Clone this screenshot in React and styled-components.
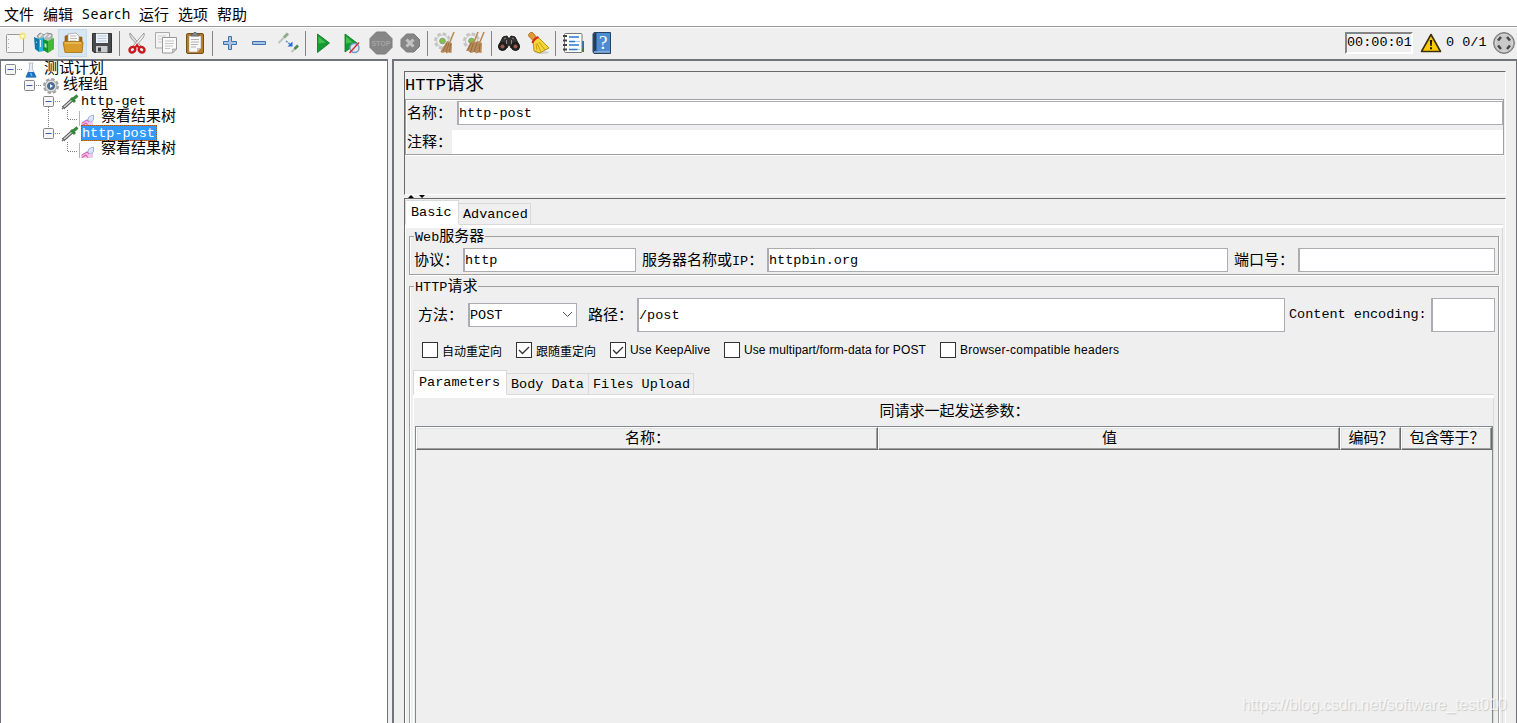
import React from "react";
import styled, { createGlobalStyle } from "styled-components";

const GlobalStyle = createGlobalStyle`
  * { box-sizing: border-box; }
  body {
    margin: 0;
    overflow: hidden;
    background: #fff;
    color: #000;
    font-family: "Liberation Mono", "Noto Sans CJK SC", monospace;
  }
  svg { display: block; flex: none; }
`;

/* ---------- text ---------- */

// CJK glyphs are drawn a little larger than the monospaced latin ones
const Text = ({ children, size = 15 }) =>
  children.split(/([\u2e80-\uffff]+)/).filter(Boolean).map((part, i) =>
    /[\u2e80-\uffff]/.test(part) ? (
      <Han key={i} $size={size}>{part}</Han>
    ) : (
      <Latin key={i} $size={size}>{part}</Latin>
    )
  );

const Han = styled.span`
  font-family: "Noto Sans CJK SC", sans-serif;
  font-size: ${props => props.$size}px;
  font-weight: 400;
`;

const Latin = styled.span`
  font-family: "Liberation Mono", monospace;
  font-size: ${props => props.$size * 0.9}px;
`;

/* ---------- toolbar icons ---------- */

const Svg = ({ children, size = 24 }) => (
  <svg width={size} height={size} viewBox="0 0 24 24" fill="none">{children}</svg>
);

const NewIcon = () => (
  <Svg>
    <rect x="3.5" y="3.5" width="17" height="18" rx="1" fill="#f6f6f6" stroke="#999" />
    <path d="M5.5 8v1M5.5 12v1M5.5 16v1" stroke="#aaa" />
    <circle cx="19.5" cy="5" r="3.4" fill="#f5e56b" opacity=".8" />
    <circle cx="19.5" cy="5" r="1.6" fill="#fffce0" />
  </Svg>
);

const TemplatesIcon = () => (
  <Svg>
    <path d="M5 5l3-3 4 2 3-2 5 1v9l-9 2z" fill="#b5bcbc" stroke="#778080" strokeWidth=".8" />
    <path d="M7 6l3-3M12 6l3-3M16 6l3-2" stroke="#eee" strokeWidth="1.3" />
    <path d="M2 6l5 2v13l-4-3z" fill="#087daa" />
    <path d="M7 8l5-2v14l-5 1z" fill="#2cb4e5" />
    <path d="M8.5 9v7M4 11l1 .5" stroke="#d9f5ff" />
    <path d="M11 8l5 2v12l-5-3z" fill="#159132" />
    <path d="M16 10l6-3v11l-6 4z" fill="#43ba37" />
    <path d="M12.5 12l2 1v4l-2-1z" fill="#b8edba" />
  </Svg>
);

const OpenIcon = () => (
  <Svg>
    <path d="M4 11V5l4-1 2 2h11v13H4z" fill="#9d6710" stroke="#865814" strokeWidth=".6" />
    <path d="M7 12V3l8-1 3 3v8z" fill="#fafafa" stroke="#999" strokeWidth=".7" />
    <path d="M9 5h6M9 7.5h7M9 10h6" stroke="#aaa" strokeWidth=".8" />
    <path d="M2.2 12q0-1.5 1.5-1.5h17q1.5 0 1.3 1.5l-1 9.500H4z" fill="#d99d2b" stroke="#a5700e" strokeWidth=".8" />
    <path d="M4 12h16" stroke="#f5cf75" />
  </Svg>
);

const SaveIcon = () => (
  <Svg>
    <path d="M2.5 2.5h19v19H4l-1.5-1.5z" fill="#48494c" stroke="#303134" />
    <path d="M6 2.5h12v9.5H6z" fill="#eef3f9" />
    <path d="M7.5 5h9M7.5 7.5h9M7.5 10h9" stroke="#a6bcd3" strokeWidth=".8" />
    <path d="M6 15h11.5v6.5H6z" fill="#c9cbcd" />
    <path d="M8 16.5h3v4H8z" fill="#3a3b3e" />
  </Svg>
);

const CutIcon = () => (
  <Svg>
    <path d="M5 2q-1 2 1 5l8 9 2-1z" fill="#ddd" stroke="#888" strokeWidth=".8" />
    <path d="M19 2q1 2-1 5l-8 9-2-1z" fill="#f2f2f2" stroke="#888" strokeWidth=".8" />
    <ellipse cx="7.4" cy="18.7" rx="3" ry="2.6" stroke="#cb1a1e" strokeWidth="2.5" transform="rotate(-35 7.4 18.7)" />
    <ellipse cx="16.6" cy="18.7" rx="3" ry="2.6" stroke="#cb1a1e" strokeWidth="2.5" transform="rotate(35 16.6 18.7)" />
    <path d="M10 17l2-3 2 3" stroke="#cb1a1e" strokeWidth="2" />
  </Svg>
);

const CopyIcon = () => (
  <Svg>
    <path d="M1.5 1.5h14v15.5h-14z" fill="#f4f4f4" stroke="#aaa" />
    <path d="M4 5h8M4 8h8M4 11h4" stroke="#ccc" />
    <path d="M8.5 6.5h14V18l-4 4H8.5z" fill="#fafafa" stroke="#999" />
    <path d="M11 10h9M11 12.5h9M11 15h8M11 17.5h5" stroke="#c4c4c4" />
    <path d="M22.5 18h-4v4z" fill="#ccc" stroke="#999" strokeWidth=".7" />
  </Svg>
);

const PasteIcon = () => (
  <Svg>
    <rect x="3.5" y="2.5" width="17" height="20" rx="1.5" fill="#b87b25" stroke="#75501c" />
    <path d="M6 5h12v12l-4 4H6z" fill="#f8f8f8" stroke="#999" strokeWidth=".5" />
    <path d="M8 8.5h8M8 11h8M8 13.5h7M8 16h5" stroke="#aaa" strokeWidth=".9" />
    <path d="M18 17h-4v4z" fill="#c3c5c3" />
    <path d="M8 5V3h2l1-1.5h2L14 3h2v2z" fill="#888" stroke="#555" strokeWidth=".7" />
  </Svg>
);

const PlusIcon = () => (
  <Svg>
    <path d="M10.5 5.5h3v5h5v3h-5v5h-3v-5h-5v-3h5z" fill="#a7c5e6" stroke="#3d72ae" />
  </Svg>
);

const MinusIcon = () => (
  <Svg>
    <path d="M5.5 10.5h13v3h-13z" fill="#a7c5e6" stroke="#3d72ae" />
  </Svg>
);

const ToggleIcon = () => (
  <Svg>
    <path d="M2.5 12l7-7" stroke="#bbc5b8" strokeWidth="2" />
    <path d="M8 6.5l4-4" stroke="#8cad88" strokeWidth="3" />
    <path d="M15.5 21l4-4" stroke="#bcc5bc" strokeWidth="2" />
    <path d="M18.5 18l3.5-3.5" stroke="#4a8c4e" strokeWidth="2.6" />
    <path d="M10 10l5 4" stroke="#4d83db" strokeWidth="1.4" strokeDasharray="2 1" />
    <path d="M16.5 10.5v5h-5z" fill="#2468db" />
  </Svg>
);

const PlayIcon = () => (
  <Svg>
    <path d="M6.5 3L18.5 12 6.5 21.5z" fill="#149b31" stroke="#087322" strokeWidth=".8" />
    <path d="M7.5 5.5l7 6-7 1z" fill="#45bd4f" />
  </Svg>
);

const PlayNoTimerIcon = () => (
  <Svg>
    <path d="M5 3l12 9L5 21z" fill="#149b31" stroke="#087322" strokeWidth=".8" />
    <path d="M6 5.5l7 6-7 1z" fill="#45bd4f" />
    <circle cx="14.5" cy="17" r="4.5" fill="#dceaf6" stroke="#709cc6" strokeWidth="1.4" />
    <path d="M9.5 22L19 11.5" stroke="#d42a30" strokeWidth="1.4" />
  </Svg>
);

const StopText = styled.text`
  font: bold 8px "Liberation Sans", sans-serif;
  fill: #a4a4a4;
`;

const StopIcon = () => (
  <Svg>
    <path d="M7.5 1h9L23 7.5v9L16.5 23h-9L1 16.5v-9z" fill="#868686" stroke="#7d7d7d" />
    <StopText x="2.4" y="15" textLength="19" lengthAdjust="spacingAndGlyphs">STOP</StopText>
  </Svg>
);

const ShutdownIcon = () => (
  <Svg>
    <path d="M8.5 3H16l5.5 5.5v7L16 21H8.5L3 15.5v-7z" fill="#868686" stroke="#7a7a7a" />
    <path d="M8.5 8.5l7 7M15.5 8.5l-7 7" stroke="#c4c4c4" strokeWidth="3" />
  </Svg>
);

const Gear = () => (
  <>
    <circle cx="9.5" cy="10" r="7" stroke="#c4c4c4" strokeWidth="3" strokeDasharray="3.500 2" />
    <circle cx="9.5" cy="10" r="6" fill="#eee" stroke="#c5c5c5" />
    <circle cx="9.5" cy="10" r="2.8" fill="#7fc540" stroke="#8b9b83" />
  </>
);

const ClearIcon = () => (
  <Svg>
    <Gear />
    <path d="M21 1l-4 10" stroke="#b98d5b" strokeWidth="1.6" />
    <path d="M14 10l5 2-.5 10-3-.5-2 1-1-1.5-3.500 1-1.500-1.500z" fill="#b98b5c" />
    <path d="M14 12l-4 8M16 12l-3 9M17.5 13l-1 8" stroke="#8c6238" strokeWidth=".7" />
  </Svg>
);

const ClearAllIcon = () => (
  <Svg>
    <Gear />
    <path d="M16 1l-4 10M22 1l-4 10" stroke="#b98d5b" strokeWidth="1.6" />
    <path d="M9 10l4 1 3-1 4 2-.5 10-3-.5-2 1-2-1.500-4 1-2-2H4z" fill="#b98b5c" />
    <path d="M9.5 12l-4 7M11.5 12l-3 9M15 12l-3 9M18 13l-1 8" stroke="#8c6238" strokeWidth=".8" />
  </Svg>
);

const SearchIcon = () => (
  <Svg>
    <path d="M6 6l4-1 2 3 2-3 4 1 4 8v3h-8l-2-4-2 4H2v-3z" fill="#34302f" stroke="#1c1a19" />
    <circle cx="5.5" cy="15.5" r="4" fill="#242120" stroke="#171717" />
    <circle cx="18.5" cy="15.5" r="4" fill="#242120" stroke="#171717" />
    <circle cx="5.5" cy="15.5" r="2" fill="#9a5842" />
    <circle cx="18.5" cy="15.5" r="2" fill="#9a5842" />
    <path d="M7 8l2-1M15 7l2 1M9.5 9v4M14.5 9v4" stroke="#8b8783" />
  </Svg>
);

const ResetSearchIcon = () => (
  <Svg>
    <ellipse cx="16" cy="21.5" rx="7" ry="1.5" fill="#ccc" />
    <path d="M2.5 3.5l2-2h2l5 6L8 10.500l-5-5z" fill="#e39a31" stroke="#a15d16" strokeWidth=".8" />
    <path d="M7 10l4-4 3 2 9 9-5 2.500-4 2.500-6-2z" fill="#f5d637" stroke="#b79217" />
    <path d="M11 12l4 9M13 11l6 8M10 13l1 6" stroke="#b79218" strokeWidth=".8" />
    <path d="M6.5 12q1-4 6-6" stroke="#d72824" strokeWidth="2.2" />
  </Svg>
);

const FunctionIcon = () => (
  <Svg>
    <path d="M19 10h4v7h-4z" fill="#1b6ce3" />
    <path d="M19 17h4v4h-4z" fill="#27871b" />
    <rect x="3.5" y="2.5" width="17.5" height="19" rx="1" fill="#fff" stroke="#777" />
    <path d="M2 5h4M2 9.5h4M2 14h4M2 18.5h4" stroke="#444" strokeWidth="1.8" />
    <path d="M8 6h10M8 10.5h6M8 14h10M8 18.5h9" stroke="#2978cf" strokeWidth="1.5" />
    <path d="M14 10.5h5M16 18.5h3" stroke="#9bc6ef" strokeWidth="1.2" />
  </Svg>
);

const HelpText = styled.text`
  font: 19px "Liberation Serif", serif;
  fill: #fff;
`;

const HelpIcon = () => (
  <Svg>
    <path d="M4 1.5h16.5v21H4q-1-1-1-2V3z" fill="#2d67a8" stroke="#254461" />
    <path d="M7 2h13v19H7z" fill="#4b8cd3" />
    <path d="M3.5 3v17.5L6 19V2z" fill="#263c52" />
    <path d="M4 21h16" stroke="#c6cdd4" />
    <HelpText x="9" y="18">?</HelpText>
  </Svg>
);

const WarningIcon = () => (
  <svg width="22" height="20" viewBox="0 0 22 20">
    <path d="M11 1.5l9.500 17h-19z" fill="#fcca05" stroke="#3c3006" strokeWidth="1.6" strokeLinejoin="round" />
    <path d="M9.8 7h2.400l-.5 6h-1.400zM10 14.300h2v2h-2z" fill="#1e1a08" />
  </svg>
);

const RunningIcon = () => (
  <Svg>
    <circle cx="12" cy="12" r="10.4" fill="#a9a9a9" stroke="#737373" />
    <circle cx="12" cy="12" r="8.5" fill="#c9c9c9" stroke="#ddd" />
    <g stroke="#484848" strokeWidth="2.6">
      <path d="M6 9.500L9 6M15 6l3 3.500M6 14.500L9 18M15 18l3-3.500" />
    </g>
  </Svg>
);

/* ---------- tree icons ---------- */

const Expander = ({ up, down }) => (
  <svg width="18" height="16" viewBox="0 0 18 16" fill="none">
    {up && <path d="M5.5 0v3" stroke="#808080" strokeDasharray="1 1" />}
    {down && <path d="M5.5 13v3" stroke="#808080" strokeDasharray="1 1" />}
    <rect x=".5" y="2.5" width="10" height="10" rx="1" fill="#f5f5f5" stroke="#858585" />
    <path d="M2.5 7.5h6" stroke="#3f5fae" />
    <path d="M12 7.5h6" stroke="#808080" strokeDasharray="1 1" />
  </svg>
);

const Branch = ({ through }) => (
  <svg width="37" height="16" viewBox="0 0 37 16" fill="none">
    {through && <path d="M5.5 0v16" stroke="#808080" strokeDasharray="1 1" />}
    <path d="M24.5 0v9.5H35" stroke="#808080" strokeDasharray="1 1" />
    <path d="M36.5 1v15" stroke="#b5b5b5" />
  </svg>
);

const FlaskIcon = () => (
  <svg width="16" height="16" viewBox="0 0 16 16">
    <path d="M5.500 1h5M6.500 1v6L3 15h10L9.500 7V1" fill="#e5edf6" stroke="#b8c3cf" />
    <path d="M5 10h6l2.500 5.500h-11z" fill="#1d70bb" />
    <path d="M7.500 11l1.500 3" stroke="#70b6ee" strokeWidth="1.5" />
  </svg>
);

const ThreadGroupIcon = () => (
  <svg width="18" height="16" viewBox="0 0 18 16" fill="none">
    <circle cx="9" cy="8" r="7" stroke="#a5a5a5" strokeWidth="2" strokeDasharray="3.500 2" />
    <circle cx="9" cy="8" r="6" fill="#dedede" stroke="#a0a0a0" />
    <circle cx="9" cy="8" r="3.5" fill="#416fa8" stroke="#5c656f" />
    <path d="M8 6l3 2-3 2z" fill="#fff" />
  </svg>
);

const SamplerIcon = () => (
  <svg width="19" height="16" viewBox="0 0 19 16" fill="none">
    <path d="M2 14l9-8" stroke="#555" strokeWidth="3.5" />
    <path d="M3 13l8-7" stroke="#dadada" strokeWidth="1.5" />
    <path d="M10 4l4 4M11 6l5.500-4.500" stroke="#368a37" strokeWidth="3" />
    <path d="M1 15l2-2" stroke="#777" strokeWidth="1.5" />
  </svg>
);

const ListenerIcon = () => (
  <svg width="15" height="16" viewBox="0 0 15 16" fill="none">
    <path d="M1 16v-3l5-3 3 2 4-3v7z" fill="#f0c8ea" />
    <path d="M2 13l5-3 2 2" stroke="#d070bd" strokeWidth="1.2" />
    <path d="M8 9.500q0-3 2.500-3.500l3-1v5l-3 2z" fill="#dbe6fa" stroke="#8fa6d6" strokeWidth=".8" />
    <path d="M2 15.500l4-2.500 2 2.500" stroke="#df5baa" strokeWidth="1.2" />
  </svg>
);

/* ---------- page parts ---------- */

const Window = styled.div`
  position: relative;
  width: 1517px;
  height: 723px;
  overflow: hidden;
  display: flex;
  flex-direction: column;
  background: #efefef;
`;

const MenuBar = styled.nav`
  display: flex;
  gap: 9px;
  height: 27px;
  padding-left: 4px;
  background: #fff;
  border-bottom: 1px solid #999;
  font: 15px/28px "Noto Sans", "Noto Sans CJK SC", sans-serif;
`;

const MenuItem = styled.span`
  width: ${props => props.$width}px;
  white-space: nowrap;
  letter-spacing: ${props => props.$spacing || 0}px;
  font-size: ${props => (props.$spacing ? 14 : 15)}px;
`;

const Toolbar = styled.div`
  display: flex;
  align-items: center;
  height: 32px;
  padding-bottom: 1px;
  border-top: 1px solid #fff;
`;

const ToolButton = styled.div`
  display: flex;
  align-items: center;
  justify-content: center;
  width: 29px;
  height: 28px;
  background: ${props => (props.$active ? "#d8e6f2" : "transparent")};
  outline: ${props => (props.$active ? "1px solid #c3dcf1" : "none")};
  outline-offset: -1px;
`;

const Separator = styled.div`
  width: 6px;
  height: 25px;
  display: flex;
  justify-content: center;
  &::after {
    content: "";
    margin-left: 1px;
    width: 1px;
    background: #858585;
  }
`;

const Status = styled.div`
  display: flex;
  align-items: center;
  margin-left: auto;
  padding-right: 1px;
  white-space: pre;
`;

const Timer = styled.div`
  width: 68px;
  height: 22px;
  line-height: 16px;
  border: 2px solid;
  border-color: #858585 #fff #fff #858585;
  margin-right: 7px;
`;

const Threads = styled.div`
  width: 46px;
  margin-left: 4px;
  line-height: 16px;
  padding-bottom: 2px;
`;

const Workspace = styled.div`
  display: flex;
  flex: 1;
  min-height: 0;
`;

const Tree = styled.div`
  width: 388px;
  margin-right: 4px;
  padding-top: 1px;
  background: #fff;
  border: solid #70747a;
  border-width: 2px 1px 0 1px;
`;

const TreeRow = styled.div`
  display: flex;
  align-items: flex-start;
  height: 16px;
  padding-left: ${props => props.$indent}px;
`;

const TreeLabel = styled.span`
  height: 16px;
  line-height: ${props => (props.$latin ? 17 : 11)}px;
  white-space: nowrap;
  margin: -1px 0 0 ${props => props.$gap}px;
  ${props => props.$selected && `
    background: #3399ff;
    color: #fff;
    outline: 1px dotted #a05b1d;
    outline-offset: -1px;
    padding: 0 2px 0 1px;
    width: 76px;
  `}
`;

const Editor = styled.div`
  flex: 1;
  display: flex;
  flex-direction: column;
  min-width: 0;
  padding: 10px 10px 0;
  border: solid #70747a;
  border-width: 2px 1px 0 2px;
`;

const HeaderPane = styled.section`
  height: 124px;
  border: 1px solid;
  border-color: #696969 #fff #fff #696969;
`;

const Title = styled.h1`
  margin: 0;
  height: 27px;
  line-height: 19px;
  font-weight: normal;
  font-size: 19px;
`;

const NameBox = styled.div`
  display: flex;
  flex-direction: column;
  height: 56px;
  margin-right: 1px;
  padding-left: 1px;
  border: 1px solid #a0a0a0;
  box-shadow: 0 1px #fff, inset 1px 1px #fff;
`;

const NameRow = styled.div`
  display: flex;
  align-items: center;
  height: ${props => props.$height}px;
  padding-top: ${props => props.$top || 0}px;
`;

const Label = styled.label`
  flex: none;
  width: ${props => props.$width}px;
  white-space: pre;
  line-height: 22px;
`;

const Field = styled.div`
  flex: ${props => (props.$width ? "none" : 1)};
  width: ${props => (props.$width ? `${props.$width}px` : "auto")};
  height: ${props => props.$height || 24}px;
  line-height: ${props => (props.$height || 24) - 2}px;
  background: #fff;
  border: 1px solid #abadb3;
  border-left-width: 2px;
  margin-right: ${props => props.$after || 0}px;
`;

const PlainField = styled.div`
  flex: 1;
  height: 24px;
  background: #fff;
`;

const Divider = styled.div`
  height: 3px;
  padding-left: 4px;
`;

const DetailPane = styled.section`
  flex: 1;
  display: flex;
  flex-direction: column;
  padding: 1px 2px 0 0;
  border: 1px solid;
  border-color: #696969 #fff #fff #696969;
  border-bottom: none;
`;

const TabStrip = styled.div`
  display: flex;
  align-items: flex-end;
  height: 25px;
  border-bottom: 1px solid #d9d9d9;
`;

const Tab = styled.div`
  width: ${props => props.$width}px;
  height: ${props => (props.$active ? 25 : 22)}px;
  margin-bottom: -1px;
  padding-left: ${props => (props.$active ? 5 : 4)}px;
  line-height: ${props => (props.$active ? 22 : 20)}px;
  white-space: pre;
  background: ${props => (props.$active ? "#fff" : "#efefef")};
  border: 1px solid #d9d9d9;
  border-left-width: ${props => (props.$active ? 1 : 0)}px;
  border-bottom-color: ${props => (props.$active ? "#fff" : "#d9d9d9")};
`;

const TabPage = styled.div`
  flex: 1;
  display: flex;
  flex-direction: column;
  border: solid #fff;
  border-width: 3px 0 0 1px;
  box-shadow: inset -1px 0 #d9d9d9;
  padding: ${props => props.$padding || "0"};
`;

const Group = styled.fieldset`
  display: flex;
  flex-direction: column;
  min-width: 0;
  margin: ${props => (props.$grow ? 3 : 0)}px 0 0;
  padding: 0;
  flex: ${props => (props.$grow ? 1 : "none")};
  border: 1px solid #a0a0a0;
  border-bottom-width: ${props => (props.$grow ? 0 : 1)}px;
  box-shadow: 1px 1px #fff, inset 1px 0 #fff;
`;

const GroupTitle = styled.legend`
  margin-left: 4px;
  padding: 0 1px;
  height: 16px;
  line-height: 14px;
`;

const ServerRow = styled.div`
  display: flex;
  align-items: center;
  height: 30px;
  padding: 2px 3px 0 4px;
`;

const RequestRow = styled.div`
  display: flex;
  align-items: center;
  height: 39px;
  padding: 2px 3px 0 8px;
`;

const Combo = styled.div`
  display: flex;
  align-items: center;
  justify-content: space-between;
  flex: none;
  width: 109px;
  height: 24px;
  padding-right: 3px;
  margin-right: 11px;
  background: #fff;
  border: 1px solid #abadb3;
  border-left-width: 2px;
`;

const CheckRow = styled.div`
  display: flex;
  align-items: center;
  height: 34px;
  padding-left: 12px;
  font: 12px "Liberation Sans", "Noto Sans CJK SC", sans-serif;
`;

const CheckLabel = styled.label`
  display: flex;
  align-items: center;
  gap: 4px;
  width: ${props => props.$width}px;
  white-space: nowrap;
  letter-spacing: ${props => props.$spacing}px;
`;

const CheckBox = styled.span`
  display: flex;
  width: 16px;
  height: 16px;
  background: #fff;
  border: 1px solid #333;
`;

const InnerTabs = styled.div`
  flex: 1;
  display: flex;
  flex-direction: column;
  margin: 3px 4px 0 3px;
`;

const TableCaption = styled.div`
  height: 28px;
  line-height: 24px;
  text-align: center;
`;

const Table = styled.div`
  flex: 1;
  margin-right: 1px;
  border: 1px solid #828790;
  border-bottom: none;
`;

const TableHead = styled.div`
  display: grid;
  grid-template-columns: 462px 462px 61px 1fr;
  height: 23px;
`;

const HeadCell = styled.div`
  text-align: center;
  line-height: 17px;
  white-space: nowrap;
  padding-left: 1px;
  border: 1px solid;
  border-color: #fff #696969 #696969 #fff;
  box-shadow: inset -1px -1px #a0a0a0, inset 1px 1px #e3e3e3;
`;

const Watermark = styled.div`
  position: absolute;
  left: 1242px;
  top: 695px;
  font: 16px/20px "Liberation Sans", sans-serif;
  letter-spacing: -0.13px;
  white-space: nowrap;
  color: rgba(255, 255, 255, 0.7);
  text-shadow: 1px 1px 1px rgba(0, 0, 0, 0.16);
`;

const menus = [
  ["文件", 30], ["编辑", 30], ["Search", 48, 0.8], ["运行", 30], ["选项", 30], ["帮助", 30]
];

const tools = [
  [NewIcon, TemplatesIcon, OpenIcon, SaveIcon],
  [CutIcon, CopyIcon, PasteIcon],
  [PlusIcon, MinusIcon, ToggleIcon],
  [PlayIcon, PlayNoTimerIcon, StopIcon, ShutdownIcon],
  [ClearIcon, ClearAllIcon],
  [SearchIcon, ResetSearchIcon],
  [FunctionIcon, HelpIcon]
];

// name, checked, width, letter spacing
const checks = [
  ["自动重定向", false, 94, 0],
  ["跟随重定向", true, 94, 0],
  ["Use KeepAlive", true, 114, 0.12],
  ["Use multipart/form-data for POST", false, 216, 0.1],
  ["Browser-compatible headers", false, 190, 0.25]
];

const App = () => (
  <Window lang="zh-CN">
    <GlobalStyle />
    <MenuBar>
      {menus.map(([name, width, spacing]) => (
        <MenuItem key={name} $width={width} $spacing={spacing}>{name}</MenuItem>
      ))}
    </MenuBar>
    <Toolbar>
      {tools.map((group, i) => (
        <React.Fragment key={i}>
          {i > 0 && <Separator />}
          {group.map((Icon, j) => (
            <ToolButton key={j} $active={Icon === OpenIcon}><Icon /></ToolButton>
          ))}
        </React.Fragment>
      ))}
      <Status>
        <Timer><Text>00:00:01</Text></Timer>
        <WarningIcon />
        <Threads><Text>0 0/1</Text></Threads>
        <RunningIcon />
      </Status>
    </Toolbar>
    <Workspace>
      <Tree>
        <TreeRow $indent={4}>
          <Expander /><FlaskIcon />
          <TreeLabel $gap={5}><Text>测试计划</Text></TreeLabel>
        </TreeRow>
        <TreeRow $indent={23}>
          <Expander /><ThreadGroupIcon />
          <TreeLabel $gap={3}><Text>线程组</Text></TreeLabel>
        </TreeRow>
        <TreeRow $indent={42}>
          <Expander down /><SamplerIcon />
          <TreeLabel $gap={1} $latin><Text>http-get</Text></TreeLabel>
        </TreeRow>
        <TreeRow $indent={42}>
          <Branch through /><ListenerIcon />
          <TreeLabel $gap={6}><Text>察看结果树</Text></TreeLabel>
        </TreeRow>
        <TreeRow $indent={42}>
          <Expander up /><SamplerIcon />
          <TreeLabel $gap={1} $latin $selected><Text>http-post</Text></TreeLabel>
        </TreeRow>
        <TreeRow $indent={42}>
          <Branch /><ListenerIcon />
          <TreeLabel $gap={6}><Text>察看结果树</Text></TreeLabel>
        </TreeRow>
      </Tree>
      <Editor>
        <HeaderPane>
          <Title><Text size={19}>HTTP请求</Text></Title>
          <NameBox>
            <NameRow $height={27}>
              <Label $width={50}><Text>名称：</Text></Label>
              <Field><Text>http-post</Text></Field>
            </NameRow>
            <NameRow $height={28} $top={3}>
              <Label $width={45}><Text>注释：</Text></Label>
              <PlainField />
            </NameRow>
          </NameBox>
        </HeaderPane>
        <Divider>
          <svg width="18" height="3" viewBox="0 0 18 3">
            <path d="M0 3l3-3 3 3zM11 0h6l-3 3z" fill="#000" />
          </svg>
        </Divider>
        <DetailPane>
          <TabStrip>
            <Tab $active $width={54}><Text>Basic</Text></Tab>
            <Tab $width={72}><Text>Advanced</Text></Tab>
          </TabStrip>
          <TabPage $padding="0 4px 0 3px">
            <Group>
              <GroupTitle><Text>Web服务器</Text></GroupTitle>
              <ServerRow>
                <Label $width={49}><Text>协议：</Text></Label>
                <Field $width={173} $after={6}><Text>http</Text></Field>
                <Label $width={125}><Text>服务器名称或IP：</Text></Label>
                <Field $after={6}><Text>httpbin.org</Text></Field>
                <Label $width={64}><Text>端口号：</Text></Label>
                <Field $width={197} />
              </ServerRow>
            </Group>
            <Group $grow>
              <GroupTitle><Text>HTTP请求</Text></GroupTitle>
              <RequestRow>
                <Label $width={50}><Text>方法：</Text></Label>
                <Combo>
                  <span><Text>POST</Text></span>
                  <svg width="11" height="7" viewBox="0 0 11 7" fill="none">
                    <path d="M1 1l4.500 4.500L10 1" stroke="#555" />
                  </svg>
                </Combo>
                <Label $width={49}><Text>路径：</Text></Label>
                <Field $height={34} $after={4}><Text>/post</Text></Field>
                <Label $width={142}><Text>Content encoding:</Text></Label>
                <Field $width={64} $height={34} />
              </RequestRow>
              <CheckRow>
                {checks.map(([name, checked, width, spacing]) => (
                  <CheckLabel key={name} $width={width} $spacing={spacing}>
                    <CheckBox>
                      {checked && (
                        <svg width="14" height="14" viewBox="0 0 14 14" fill="none">
                          <path d="M2 7l3.500 3.500L12 4" stroke="#333" strokeWidth="1.3" />
                        </svg>
                      )}
                    </CheckBox>
                    {name}
                  </CheckLabel>
                ))}
              </CheckRow>
              <InnerTabs>
                <TabStrip>
                  <Tab $active $width={94}><Text>Parameters</Text></Tab>
                  <Tab $width={82}><Text>Body Data</Text></Tab>
                  <Tab $width={105}><Text>Files Upload</Text></Tab>
                </TabStrip>
                <TabPage $padding="0 0 0 1px">
                  <TableCaption><Text>同请求一起发送参数：</Text></TableCaption>
                  <Table>
                    <TableHead>
                      <HeadCell><Text>名称：</Text></HeadCell>
                      <HeadCell><Text>值</Text></HeadCell>
                      <HeadCell><Text>编码？</Text></HeadCell>
                      <HeadCell><Text>包含等于？</Text></HeadCell>
                    </TableHead>
                  </Table>
                </TabPage>
              </InnerTabs>
            </Group>
          </TabPage>
        </DetailPane>
      </Editor>
    </Workspace>
    <Watermark>https://blog.csdn.net/software_test010</Watermark>
  </Window>
);

export default App;
